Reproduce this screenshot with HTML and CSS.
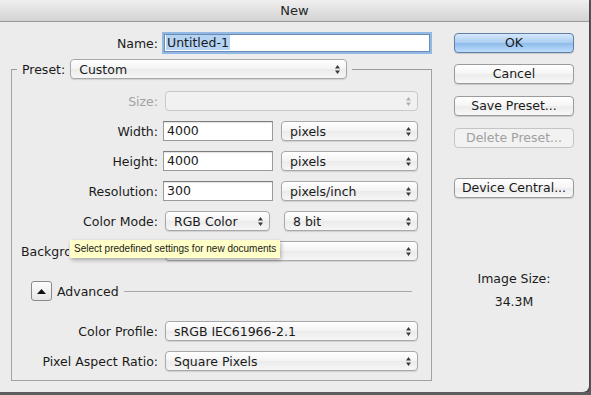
FILE: index.html
```html
<!DOCTYPE html>
<html lang="en">
<head>
    <meta charset="UTF-8">
    <title>New</title>
    <link rel="stylesheet" href="styles.css">
</head>
<body>
<div class="window">
    <!-- title bar -->
    <div class="titlebar">New</div>
    <div class="body">
        <!-- left side: the form -->
        <div class="main">
            <div class="name-row">
                <label>Name:</label>
                <div class="field name-field"><span class="sel">Untitled-1</span></div>
            </div>
            <fieldset class="preset">
                <legend>
                    <span>Preset:</span>
                    <div class="popup preset-popup">Custom<svg class="updown" viewBox="0 0 5 9"><path d="M2.5 0L5 3.4H0Z M0 5.6H5L2.5 9Z"/></svg></div>
                </legend>
                <div class="row disabled">
                    <label>Size:</label>
                    <div class="popup wide"><svg class="updown" viewBox="0 0 5 9"><path d="M2.5 0L5 3.4H0Z M0 5.6H5L2.5 9Z"/></svg></div>
                </div>
                <div class="row">
                    <label>Width:</label>
                    <div class="field num">4000</div>
                    <div class="popup unit">pixels<svg class="updown" viewBox="0 0 5 9"><path d="M2.5 0L5 3.4H0Z M0 5.6H5L2.5 9Z"/></svg></div>
                </div>
                <div class="row">
                    <label>Height:</label>
                    <div class="field num">4000</div>
                    <div class="popup unit">pixels<svg class="updown" viewBox="0 0 5 9"><path d="M2.5 0L5 3.4H0Z M0 5.6H5L2.5 9Z"/></svg></div>
                </div>
                <div class="row">
                    <label>Resolution:</label>
                    <div class="field num">300</div>
                    <div class="popup unit">pixels/inch<svg class="updown" viewBox="0 0 5 9"><path d="M2.5 0L5 3.4H0Z M0 5.6H5L2.5 9Z"/></svg></div>
                </div>
                <div class="row">
                    <label>Color Mode:</label>
                    <div class="popup mode">RGB Color<svg class="updown" viewBox="0 0 5 9"><path d="M2.5 0L5 3.4H0Z M0 5.6H5L2.5 9Z"/></svg></div>
                    <div class="popup bits">8 bit<svg class="updown" viewBox="0 0 5 9"><path d="M2.5 0L5 3.4H0Z M0 5.6H5L2.5 9Z"/></svg></div>
                </div>
                <div class="row bg-row">
                    <label class="bg-label">Background Contents:</label>
                    <div class="popup bg-popup"><svg class="updown" viewBox="0 0 5 9"><path d="M2.5 0L5 3.4H0Z M0 5.6H5L2.5 9Z"/></svg></div>
                    <!-- tooltip over the row -->
                    <div class="tooltip">Select predefined settings for new documents</div>
                </div>
                <div class="advanced">
                    <div class="disclose"><svg viewBox="0 0 9 5"><path d="M4.5 0L9 5H0Z"/></svg></div>
                    <span>Advanced</span>
                    <div class="rule"></div>
                </div>
                <div class="row">
                    <label>Color Profile:</label>
                    <div class="popup wide">sRGB IEC61966-2.1<svg class="updown" viewBox="0 0 5 9"><path d="M2.5 0L5 3.4H0Z M0 5.6H5L2.5 9Z"/></svg></div>
                </div>
                <div class="row">
                    <label>Pixel Aspect Ratio:</label>
                    <div class="popup wide">Square Pixels<svg class="updown" viewBox="0 0 5 9"><path d="M2.5 0L5 3.4H0Z M0 5.6H5L2.5 9Z"/></svg></div>
                </div>
            </fieldset>
        </div>
        <!-- right side: buttons -->
        <div class="side">
            <div class="btn ok">OK</div>
            <div class="btn cancel">Cancel</div>
            <div class="btn save">Save Preset...</div>
            <div class="btn delete">Delete Preset...</div>
            <div class="btn device">Device Central...</div>
            <div class="size-label">Image Size:</div>
            <div class="size-value">34.3M</div>
        </div>
    </div>
</div>
</body>
</html>
```
FILE: styles.css
```css
body{
    margin: 0;
    background: #5d5d5d;
    font-family: "DejaVu Sans", sans-serif;
    font-size: 12.5px;
    color: #1a1a1a;
}
.window{
    width: 589px;
    height: 392px;
    background: #ececec;
    border-bottom-right-radius: 6px;
    overflow: hidden;
    box-shadow: 0 1px 3px rgba(0,0,0,.6);
}
/*标题栏*/
.titlebar{
    height: 21px;
    line-height: 22px;
    border-bottom: 1px solid #9a9a9a;
    background: linear-gradient(#f0f0f0, #d3d3d3);
    text-align: center;
    font-size: 13px;
    color: #262626;
}
.body{
    display: flex;
}
.main{
    width: 432px;
}
/*名称*/
.name-row{
    display: flex;
    align-items: center;
    margin-top: 12px;
    height: 18px;
}
.name-row label{
    width: 158px;
    text-align: right;
}
.field{
    box-sizing: border-box;
    height: 19px;
    line-height: 17px;
    background: #fff;
    border: 1px solid #9a9a9a;
    border-top-color: #7d7d7d;
    box-shadow: inset 0 1px 1px rgba(0,0,0,.12);
    padding-left: 3px;
}
.name-field{
    margin-left: 6px;
    width: 266px;
    height: 18px;
    line-height: 16px;
    padding-left: 1px;
    border-color: #6c8cb4;
    box-shadow: 0 0 0 2px #92b8e4;
}
.sel{
    background: #b5d3f3;
    padding: 0 1px;
}
/*预设*/
.preset{
    box-sizing: border-box;
    width: 421px;
    margin: 7px 0 0 11px;
    padding: 12px 13px 9px 5px;
    border: 1px solid #a2a2a2;
    border-top-color: #9a9a9a;
}
.preset legend{
    display: flex;
    align-items: center;
    padding: 0 5px 0 5px;
    height: 20px;
}
.preset-popup{
    margin-left: 5px;
    width: 277px;
}
.row{
    display: flex;
    align-items: center;
    height: 20px;
    margin-bottom: 10px;
}
.row label{
    width: 141px;
    flex: none;
    text-align: right;
}
.num{
    margin-left: 5px;
    width: 110px;
    height: 20px;
    line-height: 18px;
}
/*下拉框*/
.popup{
    box-sizing: border-box;
    display: flex;
    align-items: center;
    justify-content: space-between;
    height: 20px;
    padding: 0 6px 0 8px;
    border: 1px solid #a8a8a8;
    border-radius: 4px;
    background: linear-gradient(#ffffff, #f3f3f3 50%, #ebebeb 51%, #f6f6f6);
    box-shadow: 0 1px 1px rgba(0,0,0,.12);
    flex: none;
}
.updown{
    width: 5px;
    height: 9px;
    margin-left: auto;
    fill: #3a3a3a;
}
.wide{
    margin-left: 7px;
    width: 253px;
}
.unit{
    margin-left: 8px;
    width: 137px;
}
.mode{
    margin-left: 7px;
    width: 105px;
}
.bits{
    margin-left: 14px;
    width: 134px;
}
.disabled label{
    color: #a2a2a2;
}
.disabled .popup{
    border-color: #c9c9c9;
    background: #f1f1f1;
    box-shadow: none;
}
.disabled .updown{
    fill: #b0b0b0;
}
/*背景行，提示盖住了一部分*/
.bg-row{
    position: relative;
}
.row .bg-label{
    width: 48px;
    padding-left: 4px;
    text-align: left;
    white-space: nowrap;
    overflow: hidden;
}
.bg-popup{
    margin-left: 96px;
    width: 253px;
}
.tooltip{
    position: absolute;
    top: -1px;
    left: 53px;
    width: 210px;
    height: 18px;
    box-sizing: border-box;
    padding-left: 4px;
    line-height: 17px;
    background: #ffffc7;
    font-family: "Liberation Sans", Arial, sans-serif;
    font-size: 10px;
    color: #1a1a1a;
    box-shadow: 1px 2px 4px rgba(0,0,0,.3);
}
/*高级*/
.advanced{
    display: flex;
    align-items: center;
    height: 20px;
    margin: 20px 0 20px 0;
}
.disclose{
    box-sizing: border-box;
    margin-left: 14px;
    width: 21px;
    height: 20px;
    border: 1px solid #8a8a8a;
    border-radius: 3px;
    background: linear-gradient(#fdfdfd, #e6e6e6);
    display: flex;
    align-items: center;
    justify-content: center;
}
.disclose svg{
    width: 9px;
    height: 5px;
    fill: #111;
}
.advanced span{
    margin-left: 5px;
}
.rule{
    flex: 1;
    height: 1px;
    margin: 1px 6px 0 5px;
    background: #a9a9a9;
}
.row:last-child{
    margin-bottom: 0;
}
/*右侧按钮*/
.side{
    width: 120px;
    margin-left: 22px;
    padding-top: 11px;
    display: flex;
    flex-direction: column;
}
.btn{
    box-sizing: border-box;
    height: 20px;
    line-height: 18px;
    text-align: center;
    border: 1px solid #9b9b9b;
    border-radius: 4px;
    background: linear-gradient(#ffffff, #f5f5f5 50%, #ececec 51%, #f8f8f8);
    box-shadow: 0 1px 1px rgba(0,0,0,.15);
}
.ok{
    border-color: #5f7fa6;
    background: linear-gradient(#d6e8fb, #a9cdf1 50%, #8fbcec 51%, #bcdcfa);
}
.cancel{
    margin-top: 11px;
}
.save{
    margin-top: 12px;
}
.delete{
    margin-top: 12px;
    color: #a0a0a0;
    border-color: #c4c4c4;
    background: #f2f2f2;
    box-shadow: none;
}
.device{
    margin-top: 30px;
}
.size-label{
    margin-top: 73px;
    line-height: 16px;
    text-align: center;
}
.size-value{
    margin-top: 7px;
    line-height: 16px;
    text-align: center;
}
```
